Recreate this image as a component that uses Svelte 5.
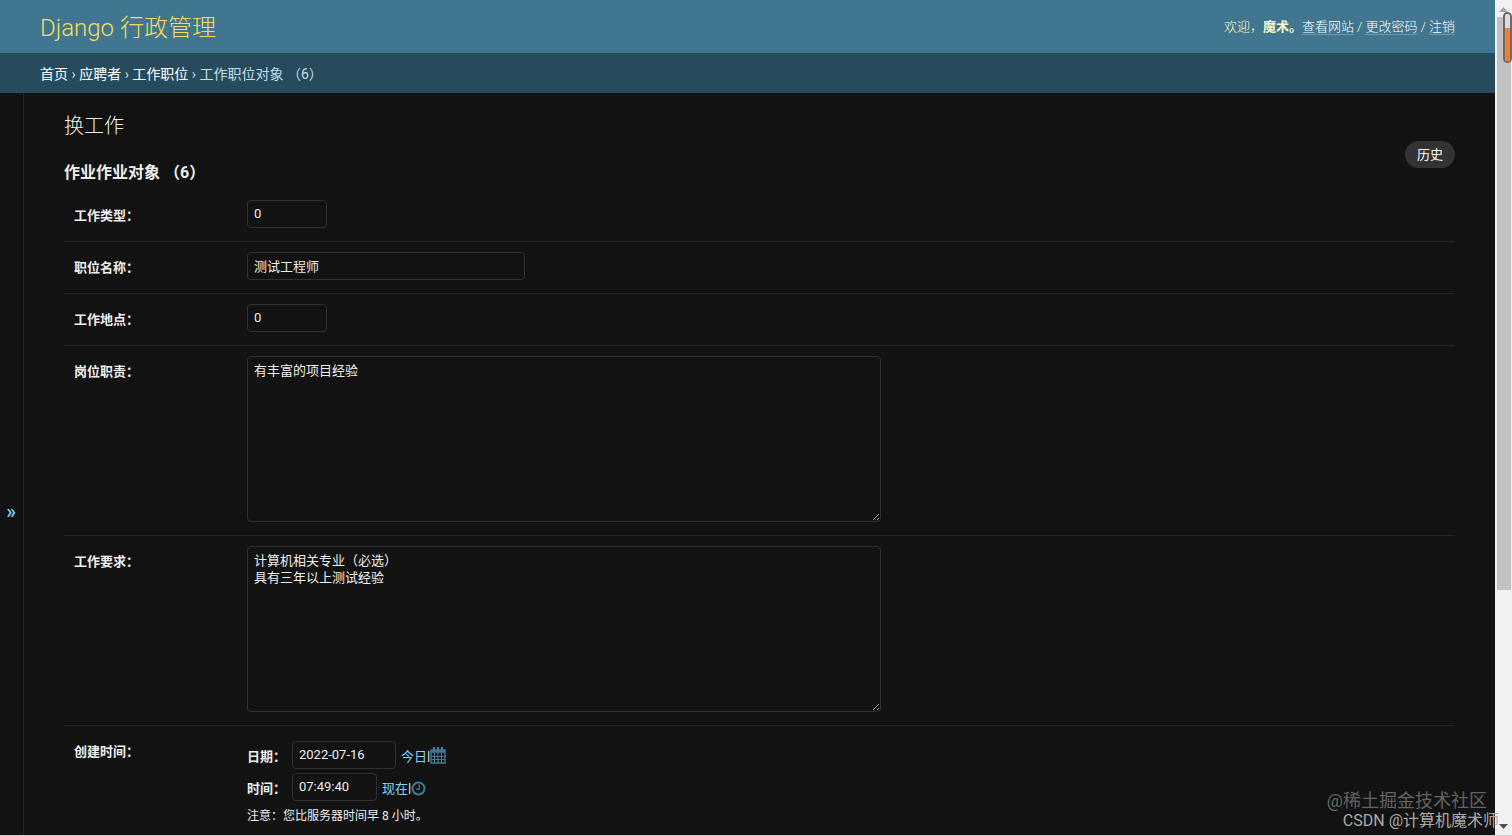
<script lang="ts">
  interface Field {
    id: string;
    label: string;
    value: string;
    kind: 'number' | 'text' | 'area';
  }

  let fields: Field[] = $state([
    { id: 'job_type', label: '工作类型：', value: '0', kind: 'number' },
    { id: 'job_name', label: '职位名称：', value: '测试工程师', kind: 'text' },
    { id: 'job_city', label: '工作地点：', value: '0', kind: 'number' },
    { id: 'job_responsibility', label: '岗位职责：', value: '有丰富的项目经验', kind: 'area' },
    { id: 'job_requirement', label: '工作要求：', value: '计算机相关专业（必选）\n具有三年以上测试经验', kind: 'area' },
  ]);

  let date = $state('2022-07-16');
  let time = $state('07:49:40');

  const pad = (n: number) => String(n).padStart(2, '0');

  function setToday(e: Event) {
    e.preventDefault();
    const d = new Date();
    date = `${d.getFullYear()}-${pad(d.getMonth() + 1)}-${pad(d.getDate())}`;
  }

  function setNow(e: Event) {
    e.preventDefault();
    const d = new Date();
    time = `${pad(d.getHours())}:${pad(d.getMinutes())}:${pad(d.getSeconds())}`;
  }
</script>

<div class="window">
  <div class="page">
    <header class="header">
      <a class="brand" href="#home">Django 行政管理</a>
      <div class="user-tools">
        欢迎，<strong>魔术。</strong><a href="#site">查看网站</a> / <a href="#password">更改密码</a> / <a href="#logout">注销</a>
      </div>
    </header>

    <nav class="breadcrumbs">
      <a href="#home">首页</a> › <a href="#applicants">应聘者</a> › <a href="#jobs">工作职位</a> › 工作职位对象 （6）
    </nav>

    <div class="main">
      <button class="toggle-nav" aria-label="切换导航">»</button>

      <main class="content">
        <div class="title-row">
          <div>
            <h1>换工作</h1>
            <h2>作业作业对象 （6）</h2>
          </div>
          <a class="history" href="#history">历史</a>
        </div>

        <form>
          {#each fields as field (field.id)}
            <div class="form-row">
              <label class="row-label" for={field.id}>{field.label}</label>
              {#if field.kind === 'area'}
                <textarea id={field.id} bind:value={field.value} spellcheck="false"></textarea>
              {:else}
                <input
                  id={field.id}
                  type="text"
                  class:small={field.kind === 'number'}
                  class:wide={field.kind === 'text'}
                  bind:value={field.value}
                />
              {/if}
            </div>
          {/each}

          <div class="form-row">
            <span class="row-label">创建时间：</span>
            <div class="datetime">
              <div class="dt-line">
                <label for="date">日期：</label>
                <input id="date" class="date" type="text" bind:value={date} />
                <span class="shortcuts">
                  <a href="#today" onclick={setToday}>今日</a>|<a href="#calendar" aria-label="选择日期"><svg width="16" height="18" viewBox="0 0 16 18" fill="none" stroke="#41799a">
                    <path d="M1 4h14v13H1z" stroke-width="1.4" />
                    <path d="M1 5.5h14" stroke-width="2.6" />
                    <path d="M4 1v4M8 1v4M12 1v4" stroke-width="2.2" />
                    <path d="M4.5 7v10M8 7v10M11.5 7v10M1 10.5h14M1 13.5h14" stroke-width="1.1" />
                  </svg></a>
                </span>
              </div>
              <div class="dt-line">
                <label for="time">时间：</label>
                <input id="time" class="time" type="text" bind:value={time} />
                <span class="shortcuts">
                  <a href="#now" onclick={setNow}>现在</a>|<a href="#clock" aria-label="选择时间"><svg width="16" height="18" viewBox="0 0 16 18" fill="none" stroke="#41799a">
                    <circle cx="7.5" cy="10.5" r="6" stroke-width="2" />
                    <path d="M8.3 6.5v4.6H5" stroke-width="1.4" />
                  </svg></a>
                </span>
              </div>
              <p class="help">注意：您比服务器时间早 8 小时。</p>
            </div>
          </div>
        </form>
      </main>
    </div>
  </div>

  <div class="scrollbar">
    <svg class="arrow" width="9" height="5" viewBox="0 0 9 5"><path d="M0 5L4.5 0L9 5z" fill="#a3a3a3" /></svg>
    <div class="track"><div class="thumb"></div></div>
    <svg class="arrow" width="9" height="5" viewBox="0 0 9 5"><path d="M0 0L4.5 5L9 0z" fill="#505050" /></svg>
    <div class="gauge"><div class="level"></div></div>
  </div>

  <div class="watermark">
    <span class="juejin">@稀土掘金技术社区</span>
    <span class="csdn">CSDN @计算机魔术师</span>
  </div>
</div>

<style>
  :global(body) {
    background: #121212;
  }

  .window {
    position: relative;
    display: flex;
    height: 100vh;
    overflow: hidden;
    box-sizing: border-box;
    border-bottom: 1px solid #ccc;
    background: #121212;
    color: #eee;
    color-scheme: dark;
    font-family: Roboto, 'Noto Sans CJK SC', sans-serif;
    font-size: 13px;
  }

  .page {
    flex: 1;
    min-width: 0;
    display: flex;
    flex-direction: column;
  }

  a {
    color: #81d4fa;
    text-decoration: none;
  }

  .header {
    display: flex;
    flex-shrink: 0;
    align-items: center;
    justify-content: space-between;
    height: 53px;
    padding: 0 40px 2px;
    box-sizing: border-box;
    background: #417690;
    color: #ffc;
  }

  .brand {
    color: #f5dd5d;
    font-size: 24px;
    font-weight: 300;
  }

  .user-tools {
    font-weight: 300;
  }

  .user-tools a {
    border-bottom: 1px solid rgba(255, 255, 255, 0.25);
    color: #fff;
  }

  .user-tools strong {
    font-weight: 700;
  }

  .breadcrumbs {
    flex-shrink: 0;
    height: 40px;
    padding: 0 40px;
    background: #264b5d;
    color: #c4dce8;
    font-size: 14px;
    line-height: 42px;
  }

  .breadcrumbs a {
    color: #fff;
  }

  .main {
    flex: 1;
    min-height: 0;
    display: flex;
  }

  .toggle-nav {
    flex: 0 0 24px;
    padding: 94px 1px 0 0;
    border: 0;
    border-right: 1px solid #242424;
    background: #121212;
    color: #81d4fa;
    font-family: inherit;
    font-size: 20px;
    font-weight: 500;
    cursor: pointer;
  }

  .content {
    flex: 1;
    min-width: 0;
    padding: 20px 40px;
  }

  .title-row {
    display: flex;
    align-items: flex-start;
    justify-content: space-between;
    padding-bottom: 4px;
  }

  h1,
  h2 {
    margin: 0;
    line-height: 27px;
  }

  h1 {
    font-size: 20px;
    font-weight: 300;
  }

  h2 {
    margin-top: 19px;
    font-size: 16px;
    font-weight: 700;
  }

  .history {
    margin-top: 28px;
    padding: 0 12px;
    border-radius: 14px;
    background: #333;
    color: #fff;
    line-height: 27px;
  }

  .form-row {
    display: flex;
    align-items: flex-start;
    padding: 10px 10px 13px;
    border-bottom: 1px solid #252525;
  }

  .row-label {
    flex: 0 0 173px;
    padding-top: 5px;
    font-weight: 700;
    line-height: 22px;
  }

  input,
  textarea {
    box-sizing: border-box;
    margin: 0;
    padding: 5px 6px;
    border: 1px solid #303030;
    border-radius: 4px;
    background: #121212;
    color: #eee;
    font-family: inherit;
    font-size: 13px;
    line-height: 17px;
  }

  input {
    height: 28px;
    padding: 4px 6px 6px;
  }

  textarea {
    width: 634px;
    height: 166px;
  }

  .small {
    width: 80px;
  }

  .wide {
    width: 278px;
  }

  .date {
    width: 104px;
  }

  .time {
    width: 85px;
  }

  .datetime {
    padding-top: 5px;
  }

  .dt-line {
    display: flex;
    align-items: center;
    gap: 5px;
    margin-bottom: 4px;
  }

  .dt-line label {
    width: 40px;
    font-weight: 700;
  }

  .shortcuts {
    display: flex;
    align-items: center;
  }

  .shortcuts svg {
    display: block;
  }

  .help {
    margin: 0;
    font-size: 12px;
    line-height: 22px;
  }

  .scrollbar {
    position: relative;
    flex: 0 0 17px;
    display: flex;
    flex-direction: column;
    align-items: center;
    justify-content: space-between;
    padding: 7px 0 6px;
    box-sizing: border-box;
    background: #f1f1f1;
  }

  .arrow {
    flex-shrink: 0;
  }

  .track {
    flex: 1;
    align-self: stretch;
    padding: 5px 1px 5px 2px;
  }

  .thumb {
    height: 71.5%;
    background: #c1c1c1;
  }

  /* small level meter floating over the scrollbar */
  .gauge {
    position: absolute;
    top: 12px;
    right: 0;
    display: flex;
    align-items: flex-end;
    width: 9px;
    height: 51px;
    box-sizing: border-box;
    border: 2px solid #6b6b6b;
    border-radius: 5px;
    background: #ddd;
  }

  .level {
    width: 100%;
    height: 70%;
    border-radius: 0 0 2px 2px;
    background: #f47b30;
  }

  .watermark {
    position: absolute;
    right: 13px;
    bottom: 4px;
    display: flex;
    flex-direction: column;
    align-items: flex-end;
    line-height: 20px;
    pointer-events: none;
  }

  .juejin {
    margin-right: 12px;
    color: #636363;
    font-size: 18px;
  }

  .csdn {
    color: #aaa;
    font-size: 16px;
  }
</style>
